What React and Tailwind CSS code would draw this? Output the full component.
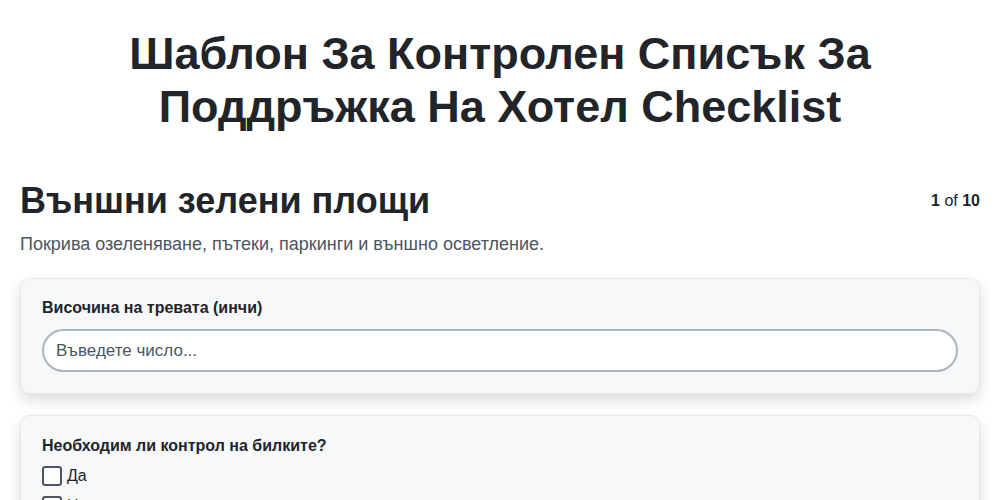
export default function App() {
  return (
    <div className="min-h-screen bg-white text-[#212529]" style={{ fontFamily: '"Liberation Sans", Arial, sans-serif' }}>
      <header className="px-5 pt-[27px] pb-[46px] text-center">
        <h1 className="mx-auto max-w-[800px] text-[45px] font-bold leading-[53px]">
          Шаблон За Контролен Списък За Поддръжка На Хотел Checklist
        </h1>
      </header>

      <section className="px-5">
        <div className="flex items-start justify-between">
          <h2 className="text-[36px] font-bold leading-[44px]">Външни зелени площи</h2>
          <div className="pt-[10px] text-[16px]">
            <span className="font-bold">1</span> of <span className="font-bold">10</span>
          </div>
        </div>
        <p className="mt-[8px] text-[18px] leading-[27px] text-[#4b5563]">
          Покрива озеленяване, пътеки, паркинги и външно осветление.
        </p>

        <div className="mt-[20px] rounded-[10px] border border-[#e5e7eb] bg-[#f7f8fa] px-[21px] pt-[19px] pb-[21px] shadow-[0_6px_14px_rgba(0,0,0,0.14)]">
          <label className="block text-[16px] font-bold leading-[20px]">Височина на тревата (инчи)</label>
          <input
            type="text"
            placeholder="Въведете число..."
            className="mt-[11px] block h-[43px] w-full rounded-full border-2 border-[#adb5bd] bg-white px-[12px] text-[17px] text-[#212529] placeholder:text-[#4b5563] outline-none"
          />
        </div>

        <div className="mt-[21px] rounded-[10px] border border-[#e5e7eb] bg-[#f7f8fa] px-[21px] pt-[20px] pb-[21px] shadow-[0_6px_14px_rgba(0,0,0,0.14)]">
          <div className="text-[16px] font-bold leading-[20px]">Необходим ли контрол на билките?</div>
          <div className="mt-[10px] flex flex-col gap-[10px]">
            {['Да', 'Не'].map((o) => (
              <label key={o} className="flex items-center gap-[5px] text-[16px] leading-[20px]">
                <span className="inline-block h-[20px] w-[20px] rounded-[3px] border-2 border-[#4b5563] bg-white" />
                {o}
              </label>
            ))}
          </div>
        </div>
      </section>
    </div>
  )
}
